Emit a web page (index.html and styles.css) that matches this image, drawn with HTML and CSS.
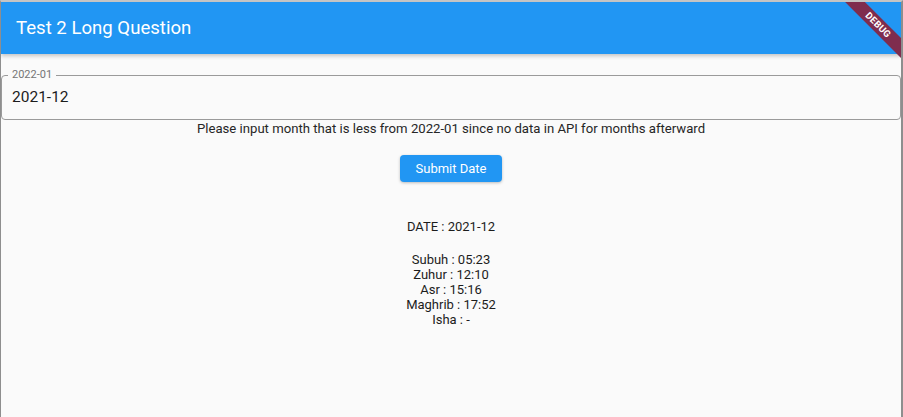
FILE: index.html
```html
<!DOCTYPE html>
<html>
<head>
<meta charset="utf-8">
<link rel="stylesheet" href="styles.css">
</head>
<body>
<div class="window">
  <header class="appbar"><h1 class="title">Test 2 Long Question</h1></header>
  <main class="content">
    <fieldset class="field">
      <legend class="field-label">2022-01</legend>
      <div class="field-value">2021-12</div>
    </fieldset>
    <p class="helper">Please input month that is less from 2022-01 since no data in API for months afterward</p>
    <button class="submit">Submit Date</button>
    <p class="date">DATE : 2021-12</p>
    <div class="times">
      <div>Subuh : 05:23</div>
      <div>Zuhur : 12:10</div>
      <div>Asr : 15:16</div>
      <div>Maghrib : 17:52</div>
      <div>Isha : -</div>
    </div>
  </main>
  <div class="banner-clip"><div class="banner">DEBUG</div></div>
</div>
</body>
</html>
```
FILE: styles.css
```css
* { box-sizing: border-box; }
html, body { margin: 0; padding: 0; }
body {
  width: 903px;
  height: 417px;
  overflow: hidden;
  font-family: Roboto, "Liberation Sans", sans-serif;
  background: #fafafa;
}
.window {
  position: relative;
  width: 903px;
  height: 417px;
  border-top: 2px solid #c4c4c4;
  border-left: 1px solid #8e8e8e;
  border-right: 2px solid #8e8e8e;
  background: #fafafa;
  overflow: hidden;
}
.appbar {
  height: 52px;
  background: #2196f3;
  display: flex;
  align-items: center;
  padding-left: 15px;
  box-shadow: 0 2px 4px rgba(0,0,0,0.22);
  position: relative;
  z-index: 1;
}
.title {
  margin: 0;
  color: #fff;
  font-size: 18.6px;
  font-weight: 400;
}
.content {
  display: flex;
  flex-direction: column;
  align-items: center;
  color: #1c1c1c;
}
.field {
  align-self: stretch;
  margin: 14px 0 0 0;
  border: 1px solid #9a9a9a;
  border-radius: 4px;
  padding: 0 6px 12px 6px;
  min-width: 0;
}
.field-label {
  padding: 0 4px;
  font-size: 11px;
  line-height: 14px;
  color: #757575;
}
.field-value {
  padding: 5px 0 0 4px;
  font-size: 15.5px;
  line-height: 20px;
  color: #1c1c1c;
}
.helper {
  margin: 1px 0 0 0;
  font-size: 13.15px;
  line-height: 16px;
  color: #262626;
}
.submit {
  margin-top: 18px;
  width: 102px;
  height: 27px;
  border: none;
  border-radius: 4px;
  background: #2196f3;
  color: #fff;
  font-family: inherit;
  font-size: 13px;
  padding: 0;
  box-shadow: 0 1px 3px rgba(0,0,0,0.25);
}
.date {
  margin: 37px 0 0 0;
  font-size: 13px;
  line-height: 15px;
}
.times {
  margin-top: 18px;
  font-size: 13px;
  line-height: 15px;
  text-align: center;
}
.banner-clip {
  position: absolute;
  top: 0;
  right: 0;
  width: 100px;
  height: 100px;
  overflow: hidden;
  z-index: 2;
  pointer-events: none;
}
.banner {
  position: absolute;
  left: 27px;
  top: 16px;
  width: 100px;
  height: 14px;
  transform: rotate(45deg);
  background: #7f2d4e;
  color: #fff;
  font-size: 9.5px;
  font-weight: 700;
  line-height: 14px;
  text-align: center;
  letter-spacing: 0.2px;
}
```
